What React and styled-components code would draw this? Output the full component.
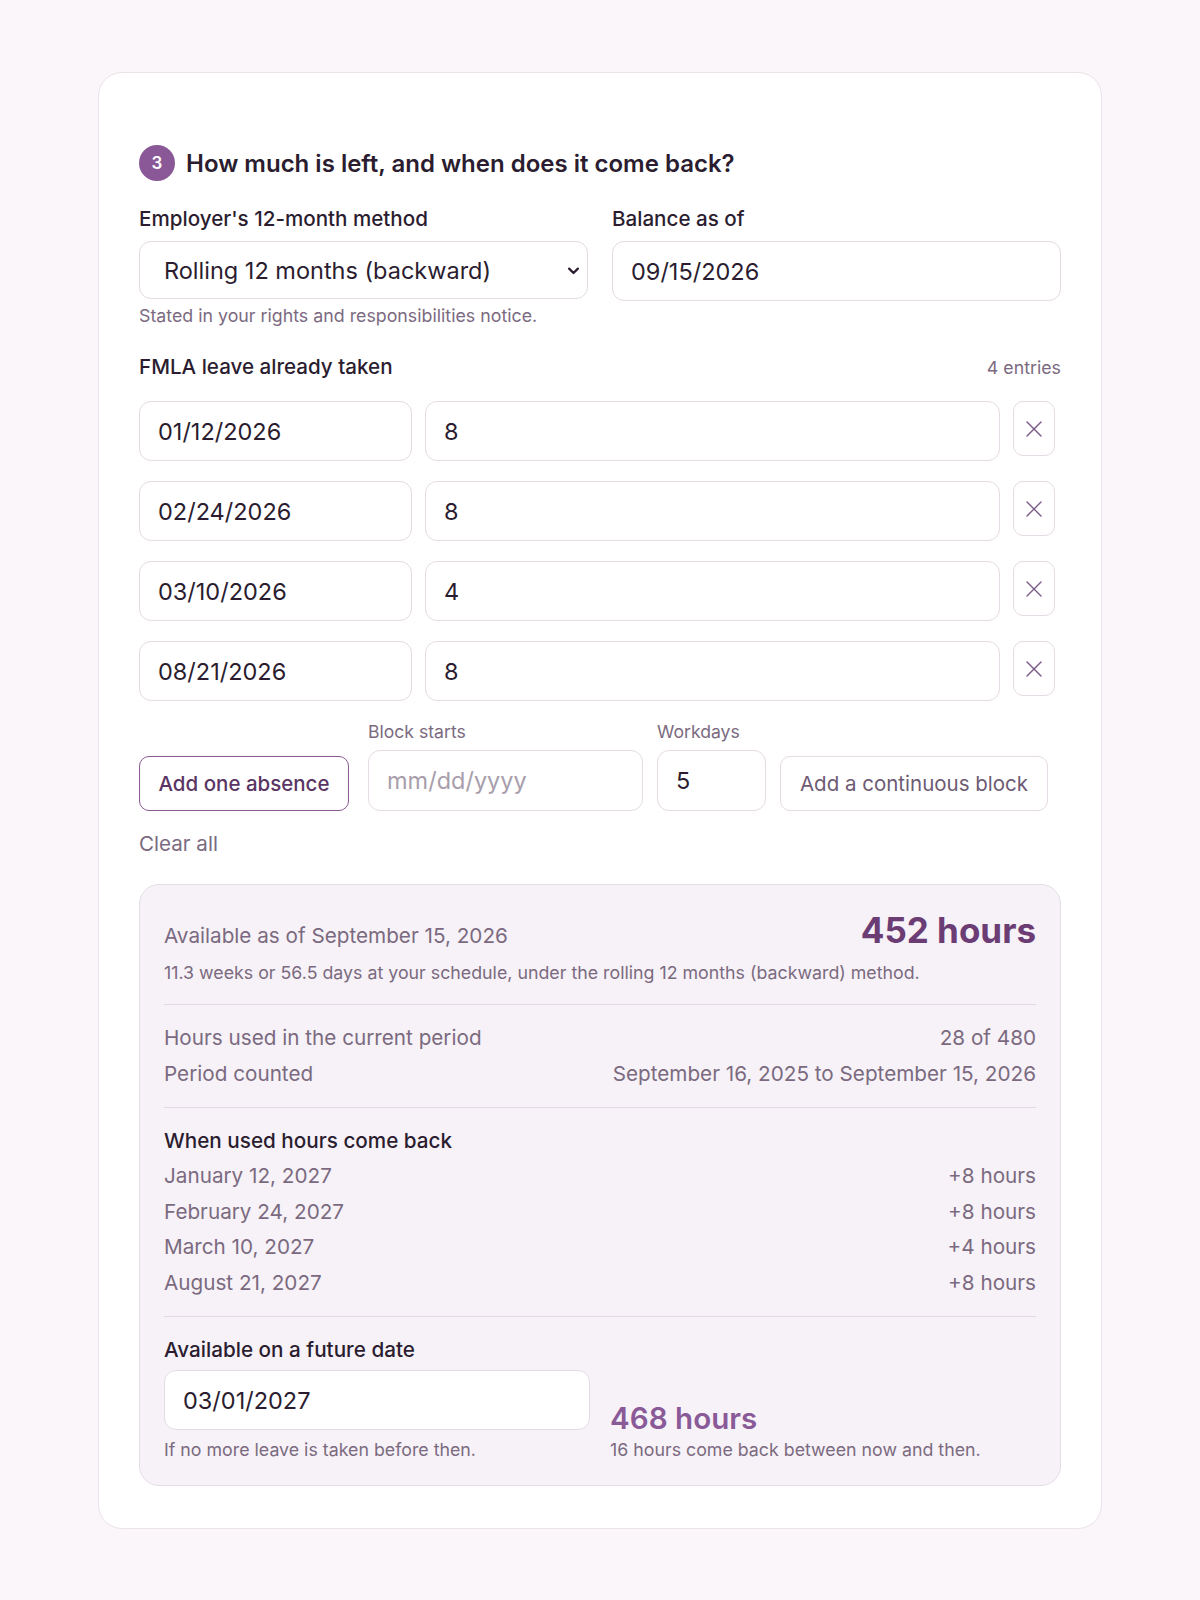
import React, { useState } from "react";
import styled, { createGlobalStyle } from "styled-components";
import { X } from "lucide-react";

const GlobalStyle = createGlobalStyle`
  body {
    margin: 0;
    background: #fbf6fa;
    font-family: Inter, "Noto Sans", "Liberation Sans", sans-serif;
    color: #2b1d2f;
  }
  * { box-sizing: border-box; }
`;

const entries = [
  { date: "01/12/2026", hours: "8" },
  { date: "02/24/2026", hours: "8" },
  { date: "03/10/2026", hours: "4" },
  { date: "08/21/2026", hours: "8" },
];

const comeBack = [
  ["January 12, 2027", "+8 hours"],
  ["February 24, 2027", "+8 hours"],
  ["March 10, 2027", "+4 hours"],
  ["August 21, 2027", "+8 hours"],
];

const App = () => {
  const [rows, setRows] = useState(entries);
  const [method, setMethod] = useState("rolling-back");

  return (
    <>
      <GlobalStyle />
      <Page>
        <Card>
          <Heading>
            <StepBadge>3</StepBadge>
            <h2>How much is left, and when does it come back?</h2>
          </Heading>

          <TopGrid>
            <div>
              <Label>Employer's 12-month method</Label>
              <SelectWrap>
                <Select value={method} onChange={(e) => setMethod(e.target.value)}>
                  <option value="rolling-back">Rolling 12 months (backward)</option>
                  <option value="calendar">Calendar year</option>
                  <option value="fixed">Fixed 12 months</option>
                  <option value="rolling-fwd">Rolling 12 months (forward)</option>
                </Select>
                <Chevron width="15" height="15" viewBox="0 0 24 24">
                  <path d="M5 9l7 7 7-7" fill="none" stroke="#2b1d2f" strokeWidth="3.6" strokeLinecap="round" strokeLinejoin="round" />
                </Chevron>
              </SelectWrap>
              <Help>Stated in your rights and responsibilities notice.</Help>
            </div>
            <div>
              <Label>Balance as of</Label>
              <Input defaultValue="09/15/2026" />
            </div>
          </TopGrid>

          <ListHeader>
            <Label as="span">FMLA leave already taken</Label>
            <Count>{rows.length} entries</Count>
          </ListHeader>

          <EntryList>
            {rows.map((row, idx) => (
              <EntryRow key={row.date}>
                <Input defaultValue={row.date} />
                <Input defaultValue={row.hours} />
                <RemoveButton
                  aria-label="Remove"
                  onClick={() => setRows(rows.filter((_, i) => i !== idx))}
                >
                  <X size={28} strokeWidth={1.2} />
                </RemoveButton>
              </EntryRow>
            ))}
          </EntryList>

          <AddRow>
            <PrimaryButton>Add one absence</PrimaryButton>
            <SmallField width="275px">
              <SmallLabel>Block starts</SmallLabel>
              <Input placeholder="mm/dd/yyyy" tall />
            </SmallField>
            <SmallField width="109px">
              <SmallLabel>Workdays</SmallLabel>
              <Input defaultValue="5" tall />
            </SmallField>
            <GhostButton>Add a continuous block</GhostButton>
          </AddRow>

          <ClearLink onClick={() => setRows([])}>Clear all</ClearLink>

          <Summary>
            <TotalRow>
              <span>Available as of September 15, 2026</span>
              <BigHours>452 hours</BigHours>
            </TotalRow>
            <SubNote>
              11.3 weeks or 56.5 days at your schedule, under the rolling 12 months (backward) method.
            </SubNote>

            <Section>
              <StatRow>
                <span>Hours used in the current period</span>
                <span>28 of 480</span>
              </StatRow>
              <StatRow>
                <span>Period counted</span>
                <span>September 16, 2025 to September 15, 2026</span>
              </StatRow>
            </Section>

            <Section>
              <SectionTitle>When used hours come back</SectionTitle>
              {comeBack.map(([d, h]) => (
                <StatRow key={d}>
                  <span>{d}</span>
                  <span>{h}</span>
                </StatRow>
              ))}
            </Section>

            <Section>
              <SectionTitle>Available on a future date</SectionTitle>
              <FutureGrid>
                <FutureCol>
                  <Input defaultValue="03/01/2027" />
                  <Caption>If no more leave is taken before then.</Caption>
                </FutureCol>
                <FutureCol end>
                  <FutureHours>468 hours</FutureHours>
                  <Caption>16 hours come back between now and then.</Caption>
                </FutureCol>
              </FutureGrid>
            </Section>
          </Summary>
        </Card>
      </Page>
    </>
  );
};

const Page = styled.div`
  padding: 72px 0 40px;
`;

const Card = styled.div`
  width: 1004px;
  margin: 0 auto;
  background: #ffffff;
  border: 1px solid #ebe2ea;
  border-radius: 24px;
  padding: 72px 40px 42px;
`;

const Heading = styled.div`
  display: flex;
  align-items: center;
  gap: 11px;
  h2 {
    margin: 0;
    font-size: 24px;
    font-weight: 600;
    color: #2b1d2f;
  }
`;

const StepBadge = styled.div`
  width: 36px;
  height: 36px;
  border-radius: 50%;
  background: #8a5896;
  color: #fff;
  font-size: 17px;
  font-weight: 600;
  display: flex;
  align-items: center;
  justify-content: center;
`;

const TopGrid = styled.div`
  display: grid;
  grid-template-columns: 1fr 1fr;
  gap: 24px;
  margin-top: 26px;
`;

const Label = styled.label`
  display: block;
  font-size: 20.6px;
  line-height: 24px;
  font-weight: 500;
  color: #2b1d2f;
  margin-bottom: 10px;
`;

const SelectWrap = styled.div`
  position: relative;
`;

const Select = styled.select`
  width: 100%;
  height: 58px;
  appearance: none;
  border: 1px solid #e4dbe4;
  border-radius: 12px;
  background: #fff;
  padding: 0 44px 0 24px;
  font-family: inherit;
  font-size: 23.5px;
  color: #2b1d2f;
  outline: none;
`;

const Chevron = styled.svg`
  position: absolute;
  right: 7px;
  top: 22px;
  pointer-events: none;
`;

const Input = styled.input`
  width: 100%;
  height: ${(p) => (p.tall ? "61px" : "60px")};
  border: 1px solid #e4dbe4;
  border-radius: 12px;
  background: #fff;
  padding: 0 18px;
  font-family: inherit;
  font-size: 23.5px;
  color: #2b1d2f;
  outline: none;
  &::placeholder {
    color: #a89eab;
  }
`;

const Help = styled.div`
  margin-top: 6px;
  font-size: 17.8px;
  line-height: 22px;
  color: #7b6a7f;
`;

const ListHeader = styled.div`
  display: flex;
  justify-content: space-between;
  align-items: center;
  margin-top: 28px;
  ${Label} {
    margin-bottom: 0;
  }
`;

const Count = styled.span`
  font-size: 17.8px;
  color: #7b6a7f;
`;

const EntryList = styled.div`
  display: flex;
  flex-direction: column;
  gap: 20px;
  margin-top: 22px;
`;

const EntryRow = styled.div`
  display: grid;
  grid-template-columns: 273px 1fr 42px;
  gap: 13px;
  padding-right: 6px;
  align-items: start;
`;

const RemoveButton = styled.button`
  width: 42px;
  height: 55px;
  border: 1px solid #e4dbe4;
  border-radius: 10px;
  background: #fff;
  color: #7a5a87;
  display: flex;
  align-items: center;
  justify-content: center;
  cursor: pointer;
  padding: 0;
`;

const AddRow = styled.div`
  display: flex;
  align-items: flex-end;
  gap: 14px;
  margin-top: 20px;
`;

const buttonBase = `
  height: 55px;
  border-radius: 10px;
  background: #fff;
  padding: 0 16px;
  font-family: inherit;
  font-size: 20.5px;
  cursor: pointer;
  white-space: nowrap;
`;

const PrimaryButton = styled.button`
  ${buttonBase}
  width: 210px;
  margin-right: 5px;
  border: 1.5px solid #8a5a92;
  color: #5a3563;
  font-weight: 500;
`;

const GhostButton = styled.button`
  ${buttonBase}
  width: 268px;
  border: 1px solid #e4dbe4;
  color: #6e5b73;
`;

const SmallField = styled.div`
  width: ${(p) => p.width};
  display: flex;
  flex-direction: column;
  gap: 7px;
`;

const SmallLabel = styled.span`
  font-size: 17.6px;
  line-height: 22px;
  color: #7b6a7f;
`;

const ClearLink = styled.div`
  margin-top: 20px;
  font-size: 20.6px;
  line-height: 26px;
  color: #7b6a7f;
  cursor: pointer;
`;

const Summary = styled.div`
  margin-top: 27px;
  background: #f6f2f8;
  border: 1px solid #e6dde8;
  border-radius: 20px;
  padding: 24px;
  color: #7b6a7f;
`;

const TotalRow = styled.div`
  display: flex;
  justify-content: space-between;
  align-items: baseline;
  font-size: 20.7px;
`;

const BigHours = styled.span`
  font-size: 35px;
  line-height: 43px;
  font-weight: 700;
  color: #6b3d74;
`;

const SubNote = styled.div`
  margin-top: 10px;
  font-size: 17.8px;
  line-height: 22px;
`;

const Section = styled.div`
  margin-top: 20px;
  padding-top: 20px;
  border-top: 1px solid #e3d9e5;
  display: flex;
  flex-direction: column;
  gap: 9.5px;
`;

const SectionTitle = styled.div`
  font-size: 20.7px;
  line-height: 26px;
  font-weight: 500;
  color: #2b1d2f;
`;

const StatRow = styled.div`
  display: flex;
  justify-content: space-between;
  font-size: 20.7px;
  line-height: 26px;
`;

const FutureGrid = styled.div`
  display: grid;
  grid-template-columns: 1fr 1fr;
  gap: 20px;
  margin-top: -2px;
`;

const FutureCol = styled.div`
  display: flex;
  flex-direction: column;
  justify-content: ${(p) => (p.end ? "flex-end" : "flex-start")};
  gap: 9px;
`;

const FutureHours = styled.div`
  font-size: 29.6px;
  line-height: 36px;
  font-weight: 600;
  color: #8a5a98;
  margin-bottom: -6px;
`;

const Caption = styled.div`
  font-size: 17.8px;
  line-height: 22px;
  color: #7b6a7f;
`;

export default App;
